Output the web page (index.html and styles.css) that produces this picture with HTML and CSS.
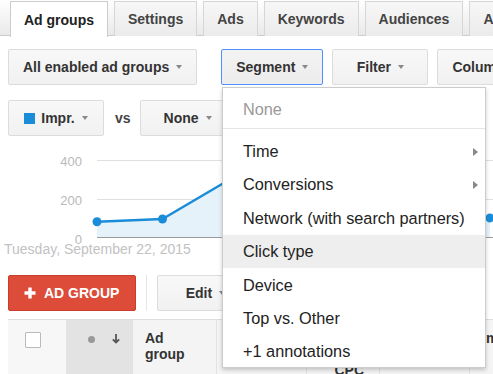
FILE: index.html
```html
<!DOCTYPE html>
<html lang="en">
<head>
  <meta charset="UTF-8" />
  <title>Ad groups</title>
  <link rel="stylesheet" href="styles.css">
</head>
<body>
  <!-- =========  TABS  ========= -->
  <nav class="tabs">
    <a class="tab active">Ad groups</a>
    <a class="tab">Settings</a>
    <a class="tab">Ads</a>
    <a class="tab">Keywords</a>
    <a class="tab">Audiences</a>
    <a class="tab">Ad extensions</a>
  </nav>

  <!-- =========  TOOLBAR  ========= -->
  <div class="toolbar">
    <button class="btn">All enabled ad groups <span class="caret"></span></button>
    <span class="sep"></span>
    <button class="btn focused">Segment <span class="caret"></span></button>
    <button class="btn">Filter <span class="caret"></span></button>
    <button class="btn">Columns <span class="caret"></span></button>
  </div>

  <!-- =========  CHART  ========= -->
  <div class="toolbar chart-controls">
    <button class="btn"><span class="swatch"></span>Impr. <span class="caret"></span></button>
    <span class="vs">vs</span>
    <button class="btn">None <span class="caret"></span></button>
  </div>

  <svg class="chart" width="493" height="117" viewBox="0 0 493 117">
    <line class="gridline" x1="97" y1="16.5" x2="493" y2="16.5"/>
    <line class="gridline" x1="97" y1="55.5" x2="493" y2="55.5"/>
    <path class="area" d="M97 77.7 L162.5 75 L228 36.5 L293.5 24 L359 44 L424.5 60 L490 74 L490 93.5 L97 93.5 Z"/>
    <line class="axis" x1="97" y1="93.5" x2="493" y2="93.5"/>
    <polyline class="series" points="97,77.7 162.5,75 228,36.5 293.5,24 359,44 424.5,60 490,74"/>
    <circle class="point" cx="97" cy="77.7" r="4.5"/>
    <circle class="point" cx="162.5" cy="75" r="4.5"/>
    <circle class="point" cx="490" cy="74" r="4.5"/>
    <text class="label" x="82" y="21.7" text-anchor="end">400</text>
    <text class="label" x="82" y="60.7" text-anchor="end">200</text>
    <text class="label" x="82" y="99.5" text-anchor="end">0</text>
    <text class="label date" x="4" y="110">Tuesday, September 22, 2015</text>
  </svg>

  <!-- =========  TABLE TOOLBAR  ========= -->
  <div class="toolbar actions">
    <button class="btn btn-red">
      <svg width="12" height="12" viewBox="0 0 12 12"><path d="M6 0.5v11M0.5 6h11" stroke="#fff" stroke-width="3.4"/></svg>
      Ad group
    </button>
    <span class="sep"></span>
    <button class="btn">Edit <span class="caret"></span></button>
  </div>

  <!-- =========  TABLE HEADER  ========= -->
  <div class="grid-head">
    <div class="col col-check"><span class="checkbox"></span></div>
    <div class="col col-status">
      <span class="dot"></span>
      <svg width="8" height="10" viewBox="0 0 8 10"><path d="M4 0v8.5M0.8 5.3L4 8.5 7.2 5.3" fill="none" stroke="#555" stroke-width="1.8"/></svg>
    </div>
    <div class="col col-name">Ad<br>group</div>
    <div class="col col-w90">Status</div>
    <div class="col col-num">Default<br>Max.<br>CPC</div>
    <div class="col col-w90">Clicks</div>
    <div class="col col-last">Impr.</div>
  </div>

  <!-- =========  SEGMENT MENU  ========= -->
  <div class="menu">
    <div class="menu-item muted">None</div>
    <div class="menu-divider"></div>
    <div class="menu-item">Time <span class="sub"></span></div>
    <div class="menu-item">Conversions <span class="sub"></span></div>
    <div class="menu-item">Network (with search partners)</div>
    <div class="menu-item hover">Click type</div>
    <div class="menu-item">Device</div>
    <div class="menu-item">Top vs. Other</div>
    <div class="menu-item">+1 annotations</div>
  </div>
</body>
</html>
```

FILE: styles.css
```css
/* --- design tokens --- */
:root {
  --text:   #333;
  --border: #dcdcdc;
  --blue:   #1a8cd8;
  --red:    #dd4b39;
}

* { box-sizing: border-box; }

body {
  margin: 0;
  position: relative;
  width: 493px;
  height: 374px;
  overflow: hidden;
  background: #fff;
  color: var(--text);
  font-family: "Liberation Sans", Arial, sans-serif;
}

/* --- tabs --- */
.tabs {
  display: flex;
  align-items: flex-start;
  gap: 6px;
  height: 36px;
  padding: 1px 0 0 10px;
  border-bottom: 1px solid #ccc;
  background: linear-gradient(#fff, #e9e9e9);
}
.tab {
  flex-shrink: 0;
  display: flex;
  align-items: center;
  height: 35px;
  padding: 0 13px;
  border: 1px solid #d6d6d6;
  border-bottom: 0;
  background: linear-gradient(#f7f7f7, #ebebeb);
  font-size: 14px;
  font-weight: bold;
  color: #444;
  white-space: nowrap;
}
.tab.active {
  height: 36px;
  margin-bottom: -1px;
  border-color: #ccc;
  background: #fff;
  color: #222;
}

/* --- toolbars & buttons --- */
.toolbar {
  display: flex;
  align-items: center;
  gap: 9px;
  height: 36px;
  margin: 13px 0 0 8px;
}
.chart-controls { margin-top: 15px; gap: 0; }
.actions { margin-top: 14px; }

.sep {
  width: 1px;
  height: 36px;
  margin: 0 3px;
  background: #e5e5e5;
}
.actions .sep { margin: 0 1px; }

.btn {
  flex-shrink: 0;
  display: inline-flex;
  align-items: center;
  justify-content: center;
  gap: 7px;
  height: 36px;
  min-width: 96px;
  padding: 0 14px;
  border: 1px solid var(--border);
  border-radius: 2px;
  background: linear-gradient(#f8f8f8, #f1f1f1);
  font-family: inherit;
  font-size: 14px;
  font-weight: bold;
  color: var(--text);
  white-space: nowrap;
}
.btn.focused {
  border-color: #4d90fe;
  background: linear-gradient(#f3f3f3, #ececec);
}
.btn-red {
  gap: 8px;
  padding: 0 16px 0 15px;
  border-color: #c83d2c;
  background: var(--red);
  color: #fff;
  text-transform: uppercase;
}

.caret {
  width: 0; height: 0;
  border-left: 3.5px solid transparent;
  border-right: 3.5px solid transparent;
  border-top: 4px solid #888;
}
.swatch {
  width: 11px; height: 11px;
  margin-right: -1px;
  background: var(--blue);
}
.vs {
  margin: 0 9px 0 11px;
  font-size: 14px;
  font-weight: bold;
  color: #444;
}

/* --- chart --- */
.chart { display: block; margin-top: 8px; }
.gridline { stroke: #e0e0e0; stroke-width: 1; }
.axis { stroke: #9a9a9a; stroke-width: 1; }
.area { fill: #e6f2fa; }
.series { fill: none; stroke: var(--blue); stroke-width: 2.5; stroke-linejoin: round; }
.point { fill: var(--blue); }
.label { fill: #b9b9b9; font-size: 13px; font-family: "Liberation Sans", Arial, sans-serif; }
.date { fill: #c2c2c2; font-size: 14px; }

/* --- table header --- */
.grid-head {
  display: flex;
  height: 60px;
  margin: 8px 0 0 8px;
  border-top: 1px solid #ddd;
}
.col {
  flex-shrink: 0;
  padding: 10px 12px 0;
  border-right: 1px solid #e2e2e2;
  background: #f4f4f4;
  font-size: 14px;
  font-weight: bold;
  line-height: 16px;
  color: #333;
  white-space: nowrap;
}
.col-check { width: 59px; padding: 12px 0 0 17px; background: #f7f7f7; }
.col-status {
  width: 66px;
  display: flex;
  align-items: flex-start;
  justify-content: flex-end;
  gap: 17px;
  padding: 14px 12px 0 0;
  background: #e3e3e3;
}
.col-name { width: 84px; }
.col-w90  { width: 90px; }
.col-num  { width: 73px; text-align: right; padding-right: 15px; }
.col-last { width: 60px; }

.checkbox {
  display: block;
  width: 16px; height: 16px;
  border: 1px solid #bbb;
  border-radius: 1px;
  background: #fff;
}
.dot {
  width: 7px; height: 7px;
  margin-top: 1.5px;
  border-radius: 50%;
  background: #999;
}

/* --- segment menu --- */
.menu {
  position: absolute;
  left: 222px;
  top: 87px;
  width: 264px;
  height: 281px;
  padding-top: 5px;
  border: 1px solid rgba(0,0,0,.2);
  background: #fff;
  box-shadow: 0 2px 4px rgba(0,0,0,.2);
  font-size: 16.3px;
  color: #222;
}
.menu-item {
  display: flex;
  align-items: center;
  justify-content: space-between;
  height: 33.4px;
  padding: 0 7px 0 20px;
  white-space: nowrap;
}
.menu-item.muted { color: #999; }
.menu-item.hover { background: #eee; }
.menu-divider {
  height: 1px;
  margin: 1.5px 0 6px;
  background: #e5e5e5;
}
.sub {
  width: 0; height: 0;
  border-top: 4px solid transparent;
  border-bottom: 4px solid transparent;
  border-left: 5px solid #888;
}
```
